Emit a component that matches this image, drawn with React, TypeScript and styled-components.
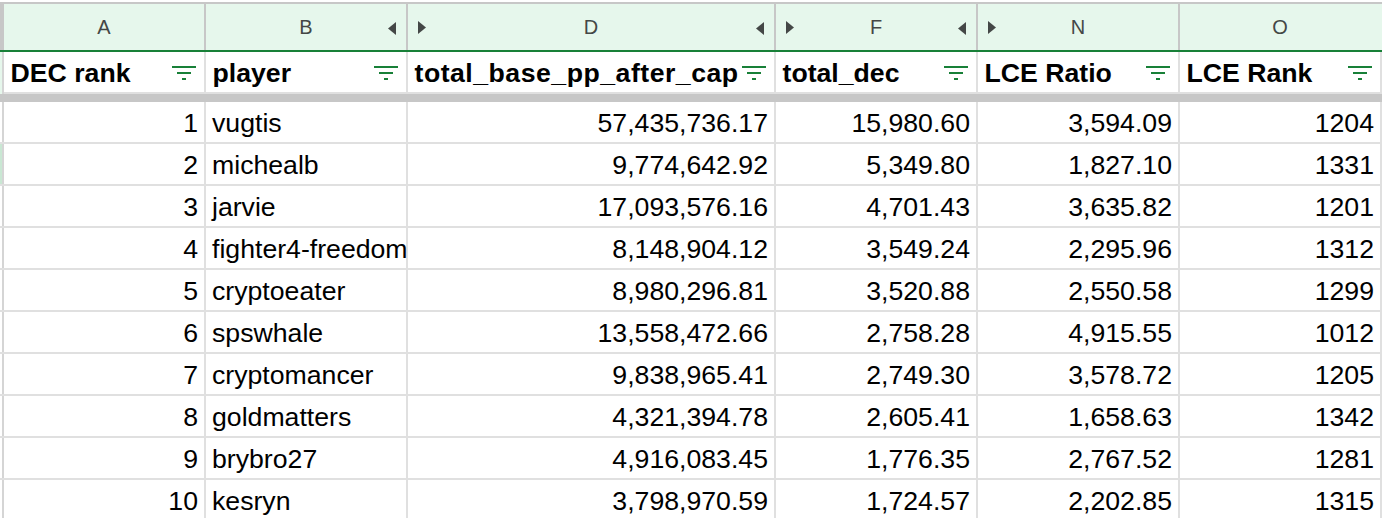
import React from "react";
import styled, { createGlobalStyle } from "styled-components";

const Global = createGlobalStyle`
  html, body { margin: 0; padding: 0; background: #fff; overflow: hidden; }
  body { font-family: "Liberation Sans", Arial, sans-serif; }
`;

const COLS = "200px 200px 366px 200px 200px 200px";

const Sheet = styled.div`
  width: 1382px;
  height: 518px;
  overflow: hidden;
  padding-top: 2px;
  box-sizing: border-box;
`;

const Letters = styled.div`
  display: grid;
  grid-template-columns: ${COLS};
  column-gap: 2px;
  box-sizing: border-box;
  height: 50px;
  padding-left: 4px;
  background: #c7c7c7;
  border-top: 2px solid #c7c7c7;
  border-bottom: 2px solid #188038;
`;

const Letter = styled.div`
  display: grid;
  grid-template-columns: 1fr auto 1fr;
  align-items: center;
  background: #e6f7ec;
  color: #444746;
  font-size: 20px;
  &:last-child {
    margin-right: -2px;
    padding-right: 2px;
  }
`;

const Arrow = styled.svg<{ $side: "left" | "right" }>`
  justify-self: ${(p) => (p.$side === "left" ? "end" : "start")};
  margin: 3px ${(p) => (p.$side === "left" ? "10px" : "0")} 0 ${(p) => (p.$side === "left" ? "0" : "10px")};
  width: 8px;
  height: 13px;
  fill: #444746;
`;

const Row = styled.div<{ $rail: string }>`
  display: grid;
  grid-template-columns: ${COLS};
  column-gap: 2px;
  box-sizing: border-box;
  height: 42px;
  padding-left: 4px;
  background: #e0e0e0;
  box-shadow: inset 2px 0 0 ${(p) => p.$rail}, inset 4px 0 0 #d5d5d5;
  border-bottom: 2px solid #e0e0e0;
`;

const HeadRow = styled(Row)`
  height: 50px;
  padding-bottom: 2px;
  border-bottom: 8px solid #c7c7c7;
`;

const Head = styled.div`
  display: flex;
  align-items: center;
  justify-content: space-between;
  padding: 0 8px 0 6.5px;
  background: #fff;
  color: #000;
  font-size: 26.67px;
  font-weight: 700;
  white-space: nowrap;
`;

const HeadLabel = styled.span<{ $track: number }>`
  padding-top: 2px;
  letter-spacing: ${(p) => p.$track}px;
`;

const Filter = styled.svg`
  flex: none;
  width: 24px;
  height: 18px;
  stroke: #188038;
  stroke-width: 2;
  fill: none;
`;

const Cell = styled.div<{ $left?: boolean }>`
  display: flex;
  align-items: center;
  justify-content: ${(p) => (p.$left ? "flex-start" : "flex-end")};
  padding: ${(p) => (p.$left ? "2px 0 0 6px" : "2px 6px 0 0")};
  background: #fff;
  color: #000;
  font-size: 26.67px;
  white-space: nowrap;
`;

const Left = () => (
  <Arrow $side="left" viewBox="0 0 8 13"><path d="M8 0v13L0 6.500z" /></Arrow>
);
const Right = () => (
  <Arrow $side="right" viewBox="0 0 8 13"><path d="M0 0v13L8 6.500z" /></Arrow>
);

const columns: [string, boolean, boolean][] = [
  ["A", false, false],
  ["B", false, true],
  ["D", true, true],
  ["F", true, true],
  ["N", true, false],
  ["O", false, false],
];

const heads: [string, number][] = [
  ["DEC rank", 0],
  ["player", 0],
  ["total_base_pp_after_cap", 0.5],
  ["total_dec", 0],
  ["LCE Ratio", 0],
  ["LCE Rank", 0],
];

const rows = [
  ["1", "vugtis", "57,435,736.17", "15,980.60", "3,594.09", "1204"],
  ["2", "michealb", "9,774,642.92", "5,349.80", "1,827.10", "1331"],
  ["3", "jarvie", "17,093,576.16", "4,701.43", "3,635.82", "1201"],
  ["4", "fighter4-freedom", "8,148,904.12", "3,549.24", "2,295.96", "1312"],
  ["5", "cryptoeater", "8,980,296.81", "3,520.88", "2,550.58", "1299"],
  ["6", "spswhale", "13,558,472.66", "2,758.28", "4,915.55", "1012"],
  ["7", "cryptomancer", "9,838,965.41", "2,749.30", "3,578.72", "1205"],
  ["8", "goldmatters", "4,321,394.78", "2,605.41", "1,658.63", "1342"],
  ["9", "brybro27", "4,916,083.45", "1,776.35", "2,767.52", "1281"],
  ["10", "kesryn", "3,798,970.59", "1,724.57", "2,202.85", "1315"],
];

export default function App() {
  return (
    <Sheet>
      <Global />
      <Letters>
        {columns.map(([name, before, after]) => (
          <Letter key={name}>
            <span>{before && <Right />}</span>
            {name}
            {after ? <Left /> : <span />}
          </Letter>
        ))}
      </Letters>
      <HeadRow $rail="#e6f7ec">
        {heads.map(([h, track]) => (
          <Head key={h}>
            <HeadLabel $track={track}>{h}</HeadLabel>
            <Filter viewBox="0 0 24 18">
              <path d="M0 4h24M5 10h14M10 16h4" />
            </Filter>
          </Head>
        ))}
      </HeadRow>
      {rows.map((r, i) => (
        <Row key={r[0]} $rail={i === 1 ? "#c9e7d3" : "#ffffff"}>
          {r.map((v, c) => (
            <Cell key={c} $left={c === 1}>{v}</Cell>
          ))}
        </Row>
      ))}
    </Sheet>
  );
}
